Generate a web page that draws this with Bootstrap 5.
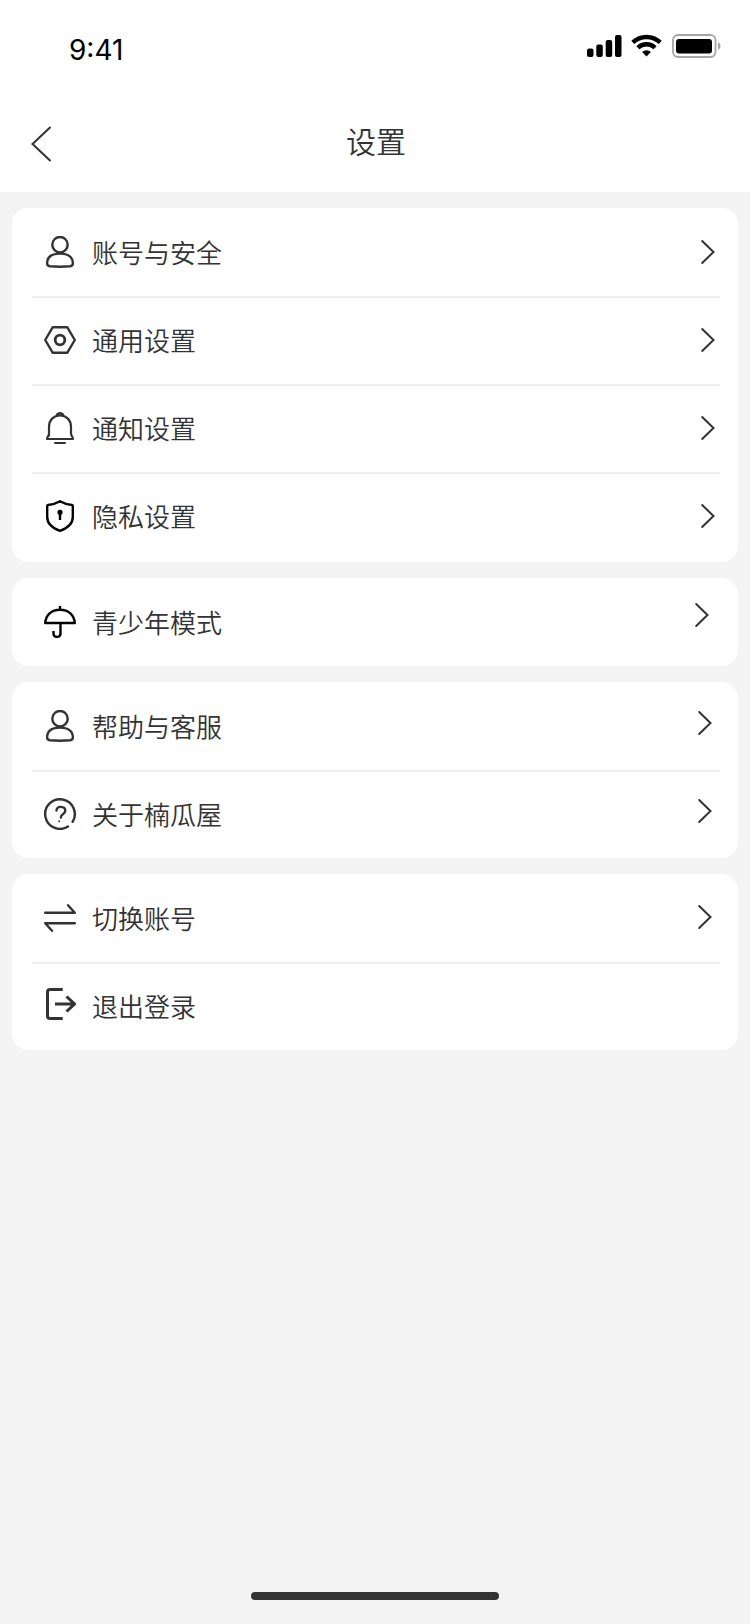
<!DOCTYPE html>
<html lang="zh-CN">
<head>
<meta charset="utf-8">
<meta name="viewport" content="width=device-width, initial-scale=1">
<title>设置</title>
<link href="https://cdn.jsdelivr.net/npm/bootstrap@5.3.0/dist/css/bootstrap.min.css" rel="stylesheet">
<style>
  body { background: #f4f4f4; color: #333; font-family: "Noto Sans CJK SC", sans-serif; font-weight: 350; }
  svg { display: block; flex: none; }
  .status-bar { height: 92px; padding: 0 28px 0 69px; color: #000; }
  .clock { font-family: Inter, sans-serif; font-size: 28px; line-height: 32px; font-weight: 400; padding-top: 8px; }
  .title-bar { display: grid; grid-template-columns: 62px 1fr 60px; height: 100px; }
  .title-bar h1 { font-size: 30px; line-height: 44px; font-weight: 350; padding-bottom: 4px; }
  .back { padding: 6px 0 2px 30px; border: 0; background: none; color: inherit; }
  .status-icons { gap: 9px; }
  .groups { padding: 16px 12px; gap: 16px; }
  .group { background: #fff; border-radius: 16px; padding: 0 18px 0 20px; }
  .group-main { padding-bottom: 2px; }
  .entry { height: 88px; padding: 0 4px 0 12px; gap: 16px; color: inherit; font-size: 26px; line-height: 38px; text-decoration: none; }
  li + li .entry { border-top: 2px solid #eee; padding-bottom: 2px; }
  .entry svg { fill: none; stroke: currentColor; stroke-width: 2.4; }
  .entry .chevron { margin-left: auto; stroke-width: 2; }
  .group-teen .chevron { margin-right: 6px; margin-bottom: 14px; }
  .group-help .chevron { margin-right: 3px; margin-bottom: 7px; }
  .group-account .chevron { margin-right: 3px; margin-bottom: 3px; }
  .exit-icon { margin-bottom: 4px; }
  .dark-icon { color: #000; }
  .home-bar { width: 33%; height: 8px; border-radius: 4px; background: #333; margin-bottom: 24px; }
</style>
</head>
<body>
<svg class="d-none" aria-hidden="true">
  <symbol id="user" viewBox="0 0 32 32">
    <circle cx="16" cy="8.7" r="7.7"/>
    <path d="M3.1 27.5C3.1 21 8 17.6 16 17.6S28.9 21 28.9 27.5C28.9 29.3 28 30 26 30.3Q16 31.2 6 30.3C4 30 3.1 29.3 3.1 27.5Z"/>
  </symbol>
  <symbol id="chevron" viewBox="0 0 16 26">
    <path d="M2.2 2 13.5 13 2.2 24" stroke-linecap="round"/>
  </symbol>
</svg>
<div class="d-flex flex-column min-vh-100">
  <header class="bg-white">
    <div class="status-bar d-flex justify-content-between align-items-center">
      <span class="clock">9:41</span>
      <div class="status-icons d-flex align-items-center">
        <svg width="35" height="24" viewBox="0 0 35 24" aria-label="信号">
          <rect x="0" y="14.5" width="6.5" height="8.5" rx="2"/>
          <rect x="9.3" y="10.5" width="6.5" height="12.5" rx="2"/>
          <rect x="18.7" y="6" width="6.5" height="17" rx="2"/>
          <rect x="28" y="1" width="6.5" height="22" rx="2"/>
        </svg>
        <svg width="32" height="24" viewBox="0 0 32 24" aria-label="无线网络">
          <g fill="none" stroke="#000" stroke-width="4.4">
            <path d="M1.8 8.4A20 20 0 0 1 29.2 8.4"/>
            <path d="M6.9 13.8A12.3 12.3 0 0 1 24.1 13.8"/>
          </g>
          <path d="M11.1 18A6.3 6.3 0 0 1 19.9 18L15.5 22.6Z"/>
        </svg>
        <svg width="50" height="24" viewBox="0 0 50 24" aria-label="电量">
          <rect x="1" y="1" width="42.5" height="22" rx="5" fill="none" stroke="#a6a6a6" stroke-width="1.8"/>
          <rect x="4" y="5" width="36" height="14.5" rx="3"/>
          <path d="M46 8C49.3 9.5 49.3 14.5 46 16Z" fill="#a6a6a6"/>
        </svg>
      </div>
    </div>
    <div class="title-bar align-items-center">
      <button class="back" type="button" aria-label="返回">
        <svg width="22" height="36" viewBox="0 0 22 36"><path d="M20 1.5 2.5 18 20 34.5" fill="none" stroke="currentColor" stroke-width="2" stroke-linecap="round"/></svg>
      </button>
      <h1 class="m-0 text-center">设置</h1>
    </div>
  </header>

  <main class="groups d-flex flex-column">
    <ul class="group group-main list-unstyled m-0">
      <li><a class="entry d-flex align-items-center" href="#">
        <svg width="32" height="32"><use href="#user"/></svg>
        账号与安全
        <svg class="chevron" width="16" height="26"><use href="#chevron"/></svg></a></li>
      <li><a class="entry d-flex align-items-center" href="#">
        <svg width="32" height="32" viewBox="0 0 32 32"><path d="M8.8 3.2H23.2L30.8 16 23.2 28.8H8.8L1.2 16Z" stroke-linejoin="round"/><circle cx="16" cy="16" r="4.8" stroke-width="2.8"/></svg>
        通用设置
        <svg class="chevron" width="16" height="26"><use href="#chevron"/></svg></a></li>
      <li><a class="entry d-flex align-items-center" href="#">
        <svg width="32" height="32" viewBox="0 0 32 32"><path d="M5 24.5V15C5 8 9.5 3.5 16 3.5S27 8 27 15V21.5C27 24 29 24.5 29 27H3C3 24.5 5 24 5 21.5M12.5 4C13 2 14.5 1.2 16 1.2S19 2 19.5 4" stroke-linejoin="round" stroke-width="2.2"/><path d="M11 31H21" stroke-linecap="round" stroke-width="2"/></svg>
        通知设置
        <svg class="chevron" width="16" height="26"><use href="#chevron"/></svg></a></li>
      <li><a class="entry d-flex align-items-center" href="#">
        <svg class="dark-icon" width="32" height="32" viewBox="0 0 32 32"><path d="M16 1.2C20 3.6 24.5 4.6 28 5Q28.8 5.1 28.8 6V17C28.8 23.5 23.5 28.2 16 30.8 8.5 28.2 3.2 23.5 3.2 17V6Q3.2 5.1 4 5C7.5 4.6 12 3.6 16 1.2Z" stroke-linejoin="round"/><circle cx="16" cy="12.3" r="1.4"/><path d="M16 12V20"/></svg>
        隐私设置
        <svg class="chevron" width="16" height="26"><use href="#chevron"/></svg></a></li>
    </ul>

    <ul class="group group-teen list-unstyled m-0">
      <li><a class="entry d-flex align-items-center" href="#">
        <svg class="dark-icon" width="32" height="32" viewBox="0 0 32 32"><path d="M1.2 17C1.8 9 7.5 3.8 16 3.8S30.2 9 30.8 17ZM16 0V3.5M16.5 17V27.5C16.5 32 9.5 32 9.5 27.5V25" stroke-linejoin="round"/></svg>
        青少年模式
        <svg class="chevron" width="16" height="26"><use href="#chevron"/></svg></a></li>
    </ul>

    <ul class="group group-help list-unstyled m-0">
      <li><a class="entry d-flex align-items-center" href="#">
        <svg width="32" height="32"><use href="#user"/></svg>
        帮助与客服
        <svg class="chevron" width="16" height="26"><use href="#chevron"/></svg></a></li>
      <li><a class="entry d-flex align-items-center" href="#">
        <svg width="32" height="32" viewBox="0 0 32 32" stroke-linecap="round"><path d="M24 28.5A14.8 14.8 0 1 1 28.6 23.8"/><path d="M12.5 12.5C12.8 7.5 21.3 7.8 21.3 12.8 21.3 16.3 16.8 15.5 16.8 19.5"/><circle cx="15.2" cy="23.2" r="1" fill="#333" stroke="none"/></svg>
        关于楠瓜屋
        <svg class="chevron" width="16" height="26"><use href="#chevron"/></svg></a></li>
    </ul>

    <ul class="group group-account list-unstyled m-0">
      <li><a class="entry d-flex align-items-center" href="#">
        <svg width="32" height="32" viewBox="0 0 32 32" stroke-linecap="round" stroke-linejoin="round"><path d="M1.2 10.7H30.8L24 3.2M30.8 21.3H1.2L8 28.8"/></svg>
        切换账号
        <svg class="chevron" width="16" height="26"><use href="#chevron"/></svg></a></li>
      <li><a class="entry d-flex align-items-center" href="#">
        <svg class="exit-icon" width="32" height="32" viewBox="0 0 32 32"><path d="M18.7 1.5H6Q3.5 1.5 3.5 4V28Q3.5 30.5 6 30.5H18.7M11 16H30M22.5 8.5 30.5 16 22.5 23.5" stroke-width="3"/></svg>
        退出登录</a></li>
    </ul>
  </main>

  <div class="home-bar mt-auto mx-auto"></div>
</div>
<script src="https://cdn.jsdelivr.net/npm/bootstrap@5.3.0/dist/js/bootstrap.bundle.min.js"></script>
</body>
</html>
